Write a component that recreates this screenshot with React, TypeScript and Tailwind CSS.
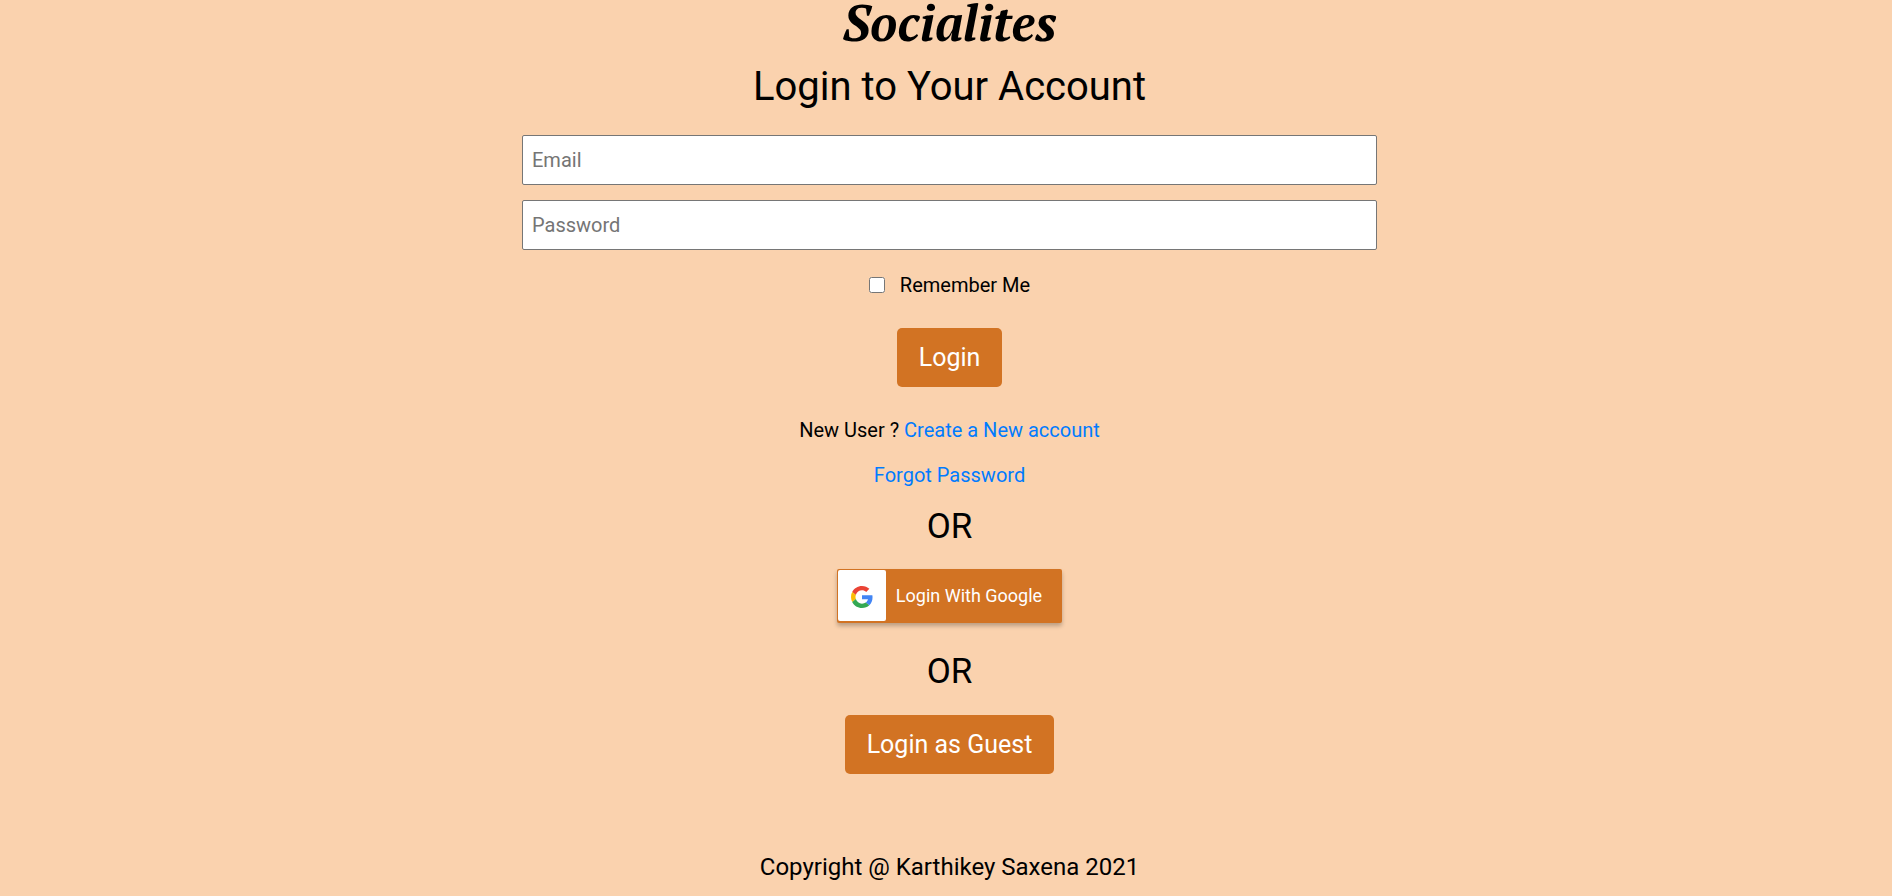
import type { ReactNode } from "react";

function GoogleLogo() {
  return (
    <svg viewBox="0 0 48 48" className="size-[22px]" aria-hidden="true">
      <path fill="#EA4335" d="M24 9.5c3.54 0 6.71 1.22 9.21 3.6l6.85-6.85C35.9 2.38 30.47 0 24 0 14.62 0 6.51 5.38 2.56 13.22l7.98 6.19C12.43 13.72 17.74 9.5 24 9.5z" />
      <path fill="#4285F4" d="M46.98 24.55c0-1.57-.15-3.09-.38-4.55H24v9.02h12.94c-.58 2.96-2.26 5.48-4.78 7.18l7.73 6c4.51-4.18 7.09-10.36 7.09-17.65z" />
      <path fill="#FBBC05" d="M10.53 28.59c-.48-1.45-.76-2.99-.76-4.59s.27-3.14.76-4.59l-7.98-6.19C.92 16.46 0 20.12 0 24c0 3.88.92 7.54 2.56 10.78l7.97-6.19z" />
      <path fill="#34A853" d="M24 48c6.48 0 11.93-2.13 15.89-5.81l-7.73-6c-2.15 1.45-4.92 2.3-8.16 2.3-6.26 0-11.57-4.22-13.47-9.91l-7.98 6.19C6.51 42.62 14.62 48 24 48z" />
    </svg>
  );
}

function Field({ label, type }: { label: string; type: string }) {
  return (
    <input
      type={type}
      aria-label={label}
      placeholder={label}
      className="h-[50px] w-full rounded-xs border border-[#767676] bg-white px-[9px] text-xl placeholder:text-[#757575]"
    />
  );
}

function SolidButton({ children, type = "button" }: { children: ReactNode; type?: "button" | "submit" }) {
  return (
    <button type={type} className="h-[59px] rounded-[5px] bg-[#d27323] px-[22px] text-[25px] text-white">
      {children}
    </button>
  );
}

function Divider() {
  return <p className="text-[35px] leading-[42px]">OR</p>;
}

export default function App() {
  return (
    <div className="flex min-h-screen flex-col items-center bg-[#fad2ae] pl-[7px] font-['Roboto',sans-serif] text-black">
      <h1 className="mb-[19px] font-['PT_Serif','Liberation_Serif',serif] text-[50px] leading-11 font-bold italic">Socialites</h1>
      <h2 className="text-[40px] leading-12">Login to Your Account</h2>
      <form className="mt-6 flex w-full max-w-[855px] flex-col items-center" onSubmit={(e) => e.preventDefault()}>
        <div className="flex w-full flex-col gap-[15px]">
          <Field label="Email" type="email" />
          <Field label="Password" type="password" />
        </div>
        <label className="mt-5 mb-7 flex items-center gap-[15px] text-xl leading-[30px]">
          <input type="checkbox" className="size-4" />
          Remember Me
        </label>
        <SolidButton type="submit">Login</SolidButton>
      </form>
      <p className="mt-7 text-xl leading-[30px]">
        New User ?{" "}
        <a href="#register" className="text-[#007bff]">Create a New account</a>
      </p>
      <a href="#forgot" className="mt-[15px] mb-4 text-xl leading-[30px] text-[#007bff]">Forgot Password</a>
      <Divider />
      <button type="button" className="mt-[21px] mb-7 flex h-[54px] items-center rounded-xs bg-[#d27323] pr-5 pl-px text-lg text-white shadow-[0_3px_4px_rgba(0,0,0,0.25)]">
        <span className="mt-px mr-2.5 flex h-[51px] w-12 items-center justify-center self-start rounded-xs bg-white pt-[3px]">
          <GoogleLogo />
        </span>
        Login With Google
      </button>
      <Divider />
      <div className="mt-[22px]">
        <SolidButton>Login as Guest</SolidButton>
      </div>
      <footer className="mt-[75px] mb-3 text-2xl leading-9">Copyright @ Karthikey Saxena 2021</footer>
    </div>
  );
}
